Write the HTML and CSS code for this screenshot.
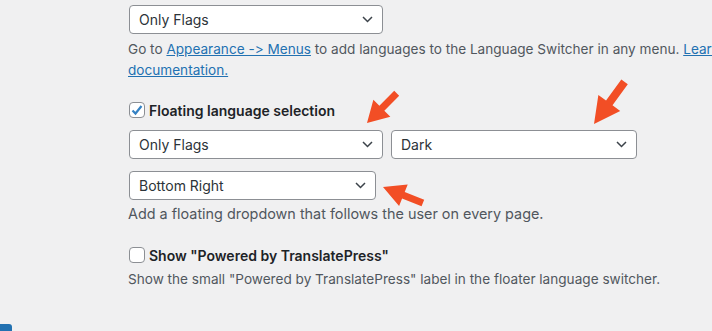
FILE: index.html
```
<!DOCTYPE html>
<html lang="en">
<head>
    <meta charset="UTF-8">
    <meta name="viewport" content="width=device-width, initial-scale=1.0">
    <title>Language Switcher</title>
    <link rel="stylesheet" href="styles.css">
</head>
<body>
    <div class="wrap">
        <div class="select w254">
            <span>Only Flags</span>
            <svg class="chev" width="11" height="7" viewBox="0 0 11 7"><polyline points="1,1 5.5,5.5 10,1"/></svg>
        </div>
        <p class="desc nowrap menus-note">Go to <a href="#">Appearance -&gt; Menus</a> to add languages to the Language Switcher in any menu. <a href="#">Learn more in our<br>documentation.</a></p>

        <label class="check-row first">
            <span class="box checked">
                <svg width="14" height="14" viewBox="0 0 14 14"><polyline points="2.5,7.5 5.5,10.5 11.5,3"/></svg>
            </span>
            Floating language selection
        </label>
        <div class="row">
            <div class="select w254">
                <span>Only Flags</span>
                <svg class="chev" width="11" height="7" viewBox="0 0 11 7"><polyline points="1,1 5.5,5.5 10,1"/></svg>
            </div>
            <div class="select w246">
                <span>Dark</span>
                <svg class="chev" width="11" height="7" viewBox="0 0 11 7"><polyline points="1,1 5.5,5.5 10,1"/></svg>
            </div>
        </div>
        <div class="select w247 third">
            <span>Bottom Right</span>
            <svg class="chev" width="11" height="7" viewBox="0 0 11 7"><polyline points="1,1 5.5,5.5 10,1"/></svg>
        </div>
        <p class="desc after-select">Add a floating dropdown that follows the user on every page.</p>

        <label class="check-row second">
            <span class="box"></span>
            Show "Powered by TranslatePress"
        </label>
        <p class="desc after-check">Show the small "Powered by TranslatePress" label in the floater language switcher.</p>
    </div>
    <div class="save-corner"></div>

    <!-- annotation arrows drawn over the screenshot -->
    <svg class="arrows" width="712" height="331" viewBox="0 0 712 331">
        <polygon points="0,0 21,-12 21,-3.5 42,-3.5 42,3.5 21,3.5 21,12" transform="translate(367 123) rotate(-45)"/>
        <polygon points="0,0 26,-13.5 26,-4 52,-4 52,4 26,4 26,13.5" transform="translate(594 124) rotate(-54)"/>
        <polygon points="0,0 22,-11.5 22,-3.5 43,-3.5 43,3.5 22,3.5 22,11.5" transform="translate(383 187) rotate(22)"/>
    </svg>
</body>
</html>
```

FILE: styles.css
```
body {
    margin: 0;
    height: 331px;
    overflow: hidden;
    background-color: #f0f0f1;
    font-family: Inter, "Noto Sans", sans-serif;
    font-feature-settings: "calt" 0;
    color: #1d2327;
    position: relative;
}

.wrap {
    padding: 5px 0 0 128px;
    width: 900px;
}

.select {
    box-sizing: border-box;
    height: 29px;
    margin-left: 1px;
    display: flex;
    align-items: center;
    justify-content: space-between;
    padding: 0 9px 0 9px;
    background-color: white;
    border: 1px solid #8c8f94;
    border-radius: 4px;
    font-size: 14px;
    color: #2c3338;
}

.row .select + .select {
    margin-left: 0;
}

.chev polyline {
    fill: none;
    stroke: #3c434a;
    stroke-width: 1.5;
}

.w254 { width: 254px; }
.w246 { width: 246px; }
.w247 { width: 247px; }

.desc {
    margin: 5px 0 0;
    font-size: 13.6px;
    line-height: 21px;
    color: #50575e;
}

.desc a {
    color: #2271b1;
}

.nowrap {
    white-space: nowrap;
}

.check-row {
    display: flex;
    align-items: center;
    gap: 4px;
    height: 20px;
    margin-left: 1px;
    font-size: 14px;
    font-weight: 600;
    color: #1d2327;
}

.check-row.first {
    margin-top: 19px;
}

.check-row.second {
    margin-top: 21px;
}

.box {
    box-sizing: border-box;
    width: 16px;
    height: 16px;
    border: 1px solid #8c8f94;
    border-radius: 4px;
    background-color: white;
    display: flex;
    align-items: center;
    justify-content: center;
}

.box polyline {
    fill: none;
    stroke: #3582c4;
    stroke-width: 2.2;
}

.row {
    display: flex;
    gap: 8px;
    margin-top: 10px;
}

.third {
    margin-top: 12px;
}

.desc.after-select {
    margin-top: 3px;
    font-size: 14.4px;
}

.desc.after-check {
    margin-top: 4px;
}

.save-corner {
    position: absolute;
    left: 0;
    top: 324px;
    width: 12px;
    height: 7px;
    background-color: #2271b1;
    border-top-right-radius: 3px;
}

.arrows {
    position: absolute;
    left: 0;
    top: 0;
}

.arrows polygon {
    fill: #f24e25;
}
```
